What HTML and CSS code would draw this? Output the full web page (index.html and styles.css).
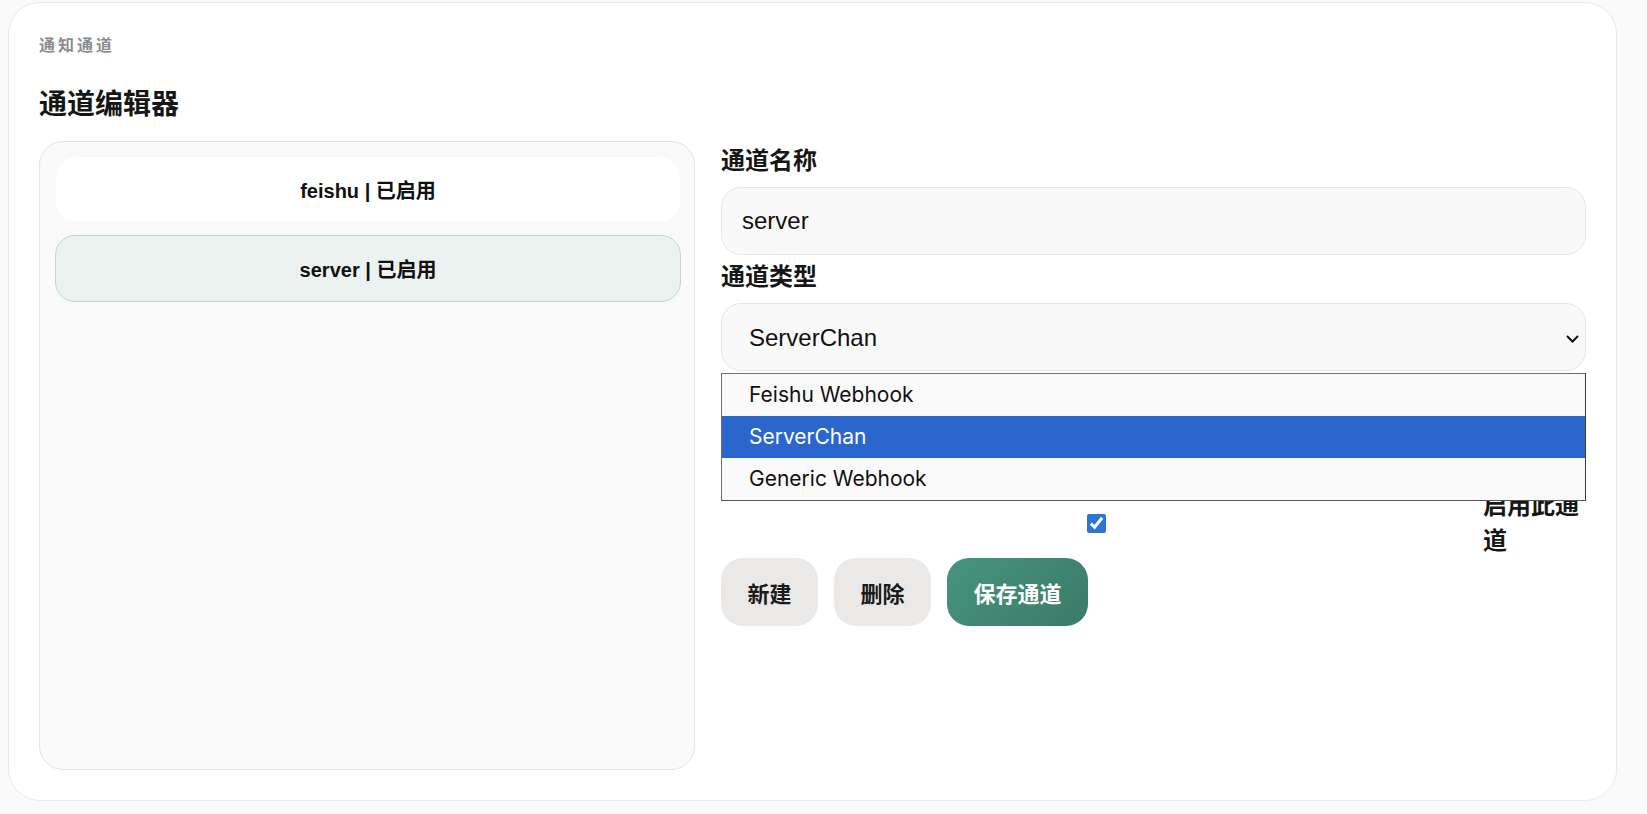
FILE: index.html
```html
<!DOCTYPE html>
<html lang="zh-CN">
<head>
  <meta charset="UTF-8">
  <title>通知通道</title>
  <link rel="stylesheet" href="styles.css">
</head>
<body>
  <section class="card">
    <p class="eyebrow">通知通道</p>
    <h2 class="title">通道编辑器</h2>
    <div class="editor">
      <div class="channel-list">
        <button class="channel" type="button">feishu | 已启用</button>
        <button class="channel active" type="button">server | 已启用</button>
      </div>
      <form class="channel-form">
        <div class="field">
          <label class="field-label" for="name">通道名称</label>
          <input id="name" class="control" type="text" value="server">
        </div>
        <div class="field">
          <label class="field-label" for="type">通道类型</label>
          <div class="select-wrap">
            <select id="type" class="control select">
              <option>Feishu Webhook</option>
              <option selected>ServerChan</option>
              <option>Generic Webhook</option>
            </select>
            <svg class="chevron" width="13" height="8" viewBox="0 0 13 8"><path d="M1 1l5.5 5.5L12 1" fill="none" stroke="#111" stroke-width="2"/></svg>
            <!-- open option list of the type select -->
            <ul class="options">
              <li>Feishu Webhook</li>
              <li class="picked">ServerChan</li>
              <li>Generic Webhook</li>
            </ul>
          </div>
        </div>
        <!-- SendKey row, hidden while the option list is open -->
        <div class="field covered">
          <label class="field-label" for="key">SendKey</label>
          <input id="key" class="control" type="text" value="SCT000000">
        </div>
        <label class="toggle">
          <span class="toggle-box"><input type="checkbox" checked></span>
          <span class="toggle-text">启用此通道</span>
        </label>
        <div class="actions">
          <button class="btn" type="button">新建</button>
          <button class="btn" type="button">删除</button>
          <button class="btn primary" type="button">保存通道</button>
        </div>
      </form>
    </div>
  </section>
</body>
</html>
```

FILE: styles.css
```css
html, body {
  margin: 0;
  padding: 0;
  background: #fafafa;
  font-family: Inter, "Noto Sans CJK SC", sans-serif;
  color: #161616;
}
.card {
  box-sizing: border-box;
  height: 799px;
  margin: 2px 30px 0 8px;
  padding: 30px;
  background: #fff;
  border: 1px solid #e9e9e9;
  border-radius: 32px;
  display: flex;
  flex-direction: column;
}
.eyebrow {
  margin: 0 0 29px;
  font-size: 16px;
  line-height: 24px;
  font-weight: 700;
  letter-spacing: 3px;
  color: #8b8b8f;
}
.title {
  margin: 0 0 19px;
  font-size: 28px;
  line-height: 36px;
  font-weight: 700;
}
.editor {
  flex: 1;
  display: grid;
  grid-template-columns: 656px 1fr;
  gap: 26px;
}
.channel-list {
  background: #fafafa;
  border: 1px solid #e4e4e4;
  border-radius: 24px;
  padding: 14px 13px 14px 15px;
  display: flex;
  flex-direction: column;
  gap: 12px;
}
.channel {
  height: 67px;
  border: 1px solid #f8f8f8;
  border-radius: 20px;
  background: #fff;
  font-family: "Liberation Sans", "Noto Sans CJK SC", sans-serif;
  font-size: 20px;
  font-weight: 700;
  color: #111;
  cursor: pointer;
}
.channel.active {
  background: #ebf2ef;
  border-color: #bcdacf;
}
.channel-form {
  display: flex;
  flex-direction: column;
  padding-top: 2px;
  margin: 0;
}
.field {
  display: grid;
  gap: 8px;
}
.field + .field {
  margin-top: 4px;
}
.field.covered {
  visibility: hidden;
}
.field-label {
  font-size: 24px;
  line-height: 36px;
  font-weight: 700;
}
.control {
  box-sizing: border-box;
  width: 100%;
  height: 68px;
  padding: 0 20px;
  background: #f9f9f9;
  border: 1px solid #e6e6e6;
  border-radius: 20px;
  font-family: "Liberation Sans", Arial, sans-serif;
  font-size: 24px;
  color: #111;
}
.select-wrap {
  position: relative;
}
.select {
  appearance: none;
  padding-left: 27px;
}
.chevron {
  position: absolute;
  right: 7px;
  top: 32px;
  pointer-events: none;
}
.options {
  position: absolute;
  top: 100%;
  left: 0;
  right: 0;
  z-index: 5;
  margin: 2px 0 0;
  padding: 0;
  list-style: none;
  background: #fafafa;
  border: 1px solid #707070;
  border-right-color: #3a3a3a;
  border-bottom-color: #555;
  font-family: Inter, sans-serif;
  font-size: 21px;
  color: #111;
}
.options li {
  height: 42px;
  line-height: 42px;
  padding: 0 27px;
}
.options li.picked {
  background: #2b66cc;
  color: #fff;
}
.toggle {
  margin-top: 1px;
  display: flex;
  align-items: center;
  gap: 12px;
  font-size: 24px;
  line-height: 35px;
  font-weight: 700;
}
.toggle-box {
  flex: 1;
  display: flex;
  justify-content: center;
}
.toggle-box input {
  width: 19px;
  height: 19px;
  margin: 0;
  accent-color: #2e74d4;
}
.toggle-text {
  flex: 0 0 103px;
}
.actions {
  display: flex;
  gap: 16px;
}
.btn {
  height: 68px;
  padding: 0 26.5px;
  border: none;
  border-radius: 22px;
  background: #ebe9e7;
  font-family: Inter, "Noto Sans CJK SC", sans-serif;
  font-size: 22px;
  font-weight: 700;
  color: #1a1a1a;
  cursor: pointer;
}
.btn.primary {
  background: linear-gradient(135deg, #47947f, #3a7a69);
  color: #fff;
}
```
